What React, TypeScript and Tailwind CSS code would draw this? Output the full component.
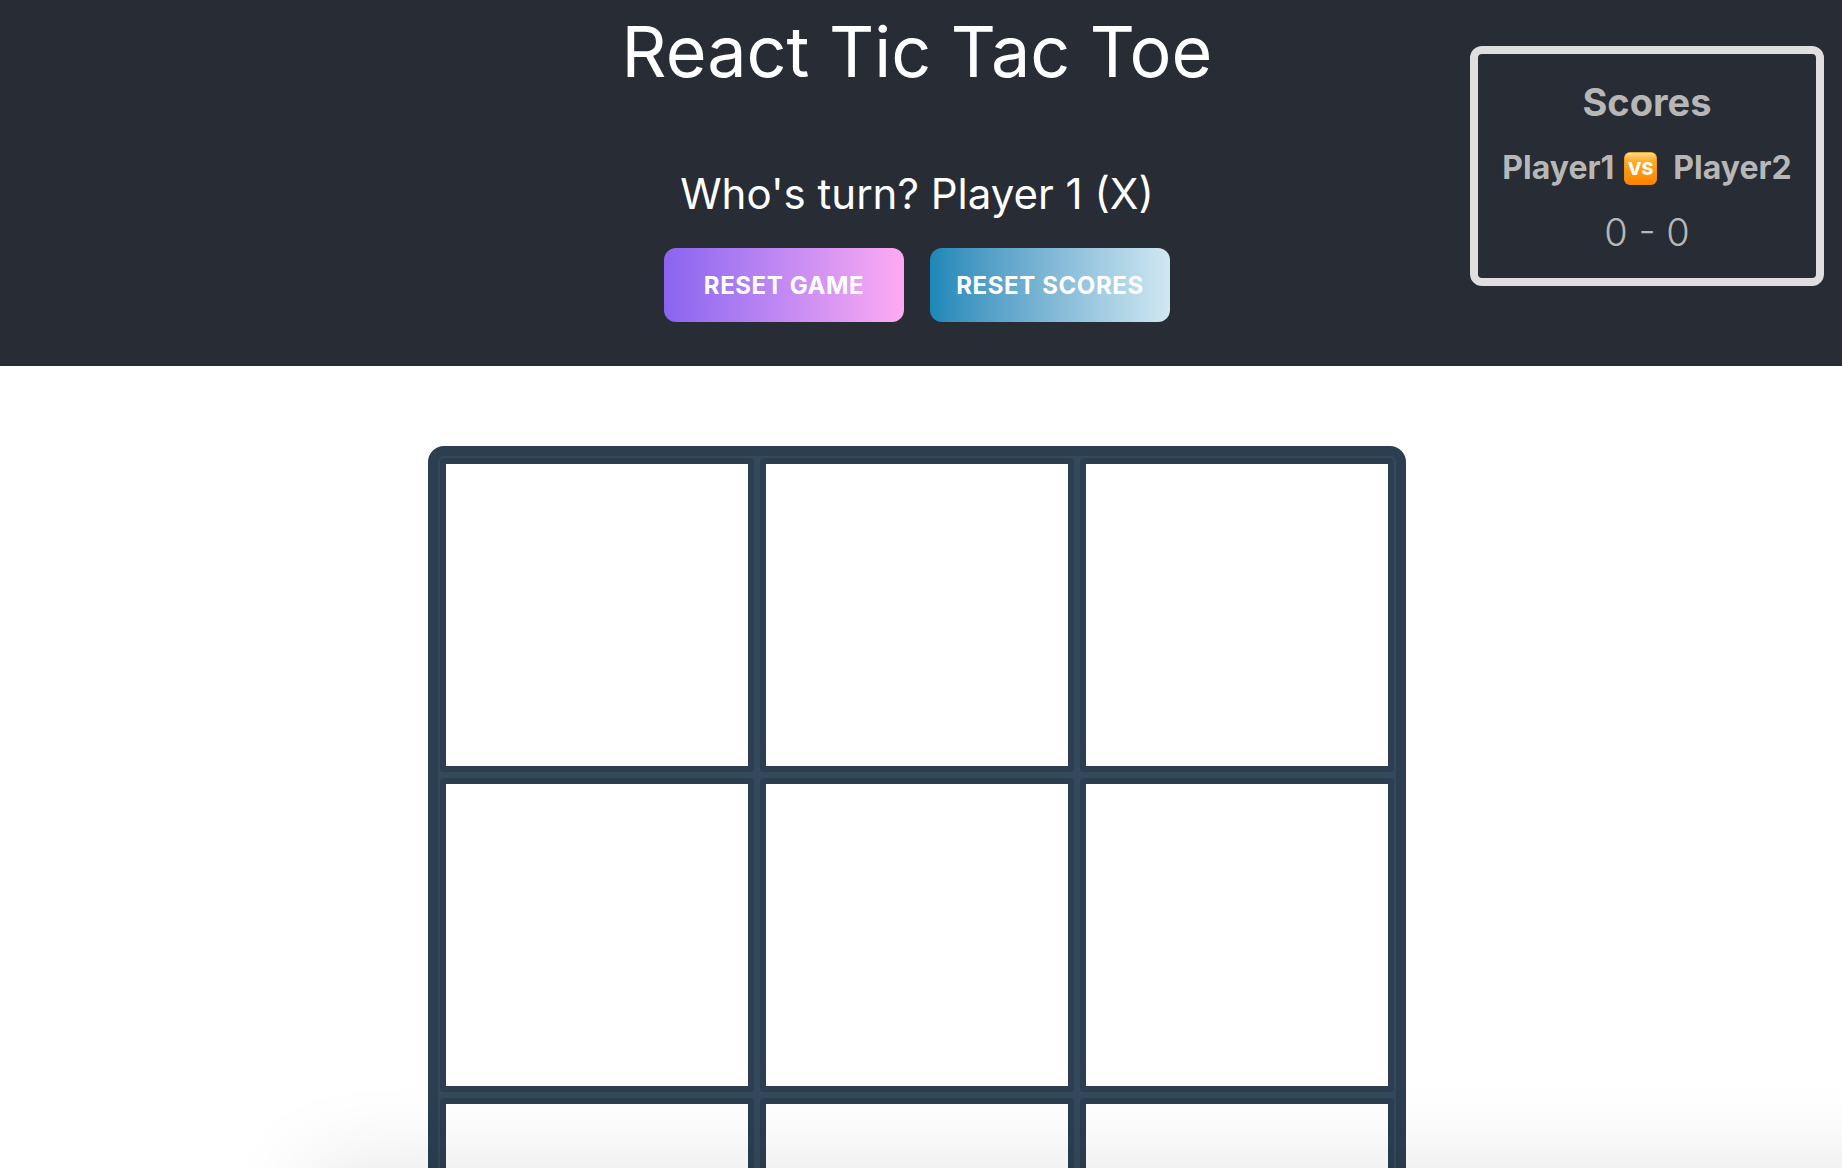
import { useState } from "react";

type Mark = "X" | "O" | null;

function VersusBadge() {
  return (
    <svg viewBox="0 0 33 33" className="h-[33px] w-[33px]" role="img" aria-label="versus">
      <defs>
        <linearGradient id="badge-fill" x1="0" y1="0" x2="0" y2="1">
          <stop offset="0" stopColor="#ffc04a" />
          <stop offset="0.35" stopColor="#ffa51a" />
          <stop offset="1" stopColor="#ff8200" />
        </linearGradient>
        <linearGradient id="badge-gloss" x1="0" y1="0" x2="0" y2="1">
          <stop offset="0" stopColor="#ffdf9c" />
          <stop offset="1" stopColor="#ffb02c" stopOpacity="0" />
        </linearGradient>
      </defs>
      <rect x="0" y="0" width="33" height="33" rx="6" fill="#d98a1c" />
      <rect x="0.5" y="0.5" width="32" height="32" rx="5.6" fill="url(#badge-fill)" />
      <rect x="1.5" y="1" width="30" height="10" rx="4.5" fill="url(#badge-gloss)" />
      <text x="16.5" y="22.5" textAnchor="middle" fontSize="18" fontWeight="800" fill="#fff" fontFamily="Inter, sans-serif">
        VS
      </text>
    </svg>
  );
}

export default function App() {
  const [cells, setCells] = useState<Mark[]>(Array(9).fill(null));
  const [scores, setScores] = useState([0, 0]);
  const turn = cells.filter(Boolean).length % 2;

  const play = (index: number) => {
    if (cells[index]) return;
    setCells(cells.map((cell, i) => (i === index ? (turn === 0 ? "X" : "O") : cell)));
  };

  return (
    <div className="relative h-screen overflow-hidden bg-white font-[Inter,sans-serif]">
      <header className="relative flex flex-col items-center bg-[#282c34] pt-2 pr-2 pb-11 text-white">
        <h1 className="text-[70px] leading-[88px]">React Tic Tac Toe</h1>
        <p className="mt-[72px] text-[42px] leading-[52px]">
          Who's turn? Player {turn + 1} ({turn === 0 ? "X" : "O"})
        </p>
        <div className="mt-7 flex gap-[26px]">
          <button
            type="button"
            onClick={() => setCells(Array(9).fill(null))}
            className="h-[74px] w-60 rounded-xl bg-linear-to-r from-[#8a64f0] to-[#ffaaf2] pt-0.5 text-2xl font-bold tracking-wide"
          >
            RESET GAME
          </button>
          <button
            type="button"
            onClick={() => setScores([0, 0])}
            className="h-[74px] w-60 rounded-xl bg-linear-to-r from-[#1a88b8] to-[#d0e8f2] pt-0.5 text-2xl font-bold tracking-wide"
          >
            RESET SCORES
          </button>
        </div>
        <section
          aria-label="Scores"
          className="absolute top-[46px] right-[18px] flex h-60 w-[354px] flex-col items-center rounded-xl border-8 border-[#e0dede] pt-6 text-[#b7b7b7]"
        >
          <h2 className="text-[38px] leading-[48px] font-bold">Scores</h2>
          <div className="mt-[22px] flex items-center text-[32px] leading-10 font-bold">
            <span>Player1</span>
            <span className="mr-4 ml-2.5">
              <VersusBadge />
            </span>
            <span>Player2</span>
          </div>
          <p className="mt-5 text-[38px] leading-[48px] font-light">
            {scores[0]} - {scores[1]}
          </p>
        </section>
      </header>

      <main className="flex justify-center pt-20 pr-2">
        <div className="grid grid-cols-3 gap-1.5 rounded-2xl border-10 border-[#2c3e50] bg-[#34495b] p-0.5">
          {cells.map((cell, i) => (
            <button
              key={i}
              type="button"
              aria-label={`Cell ${i + 1}`}
              onClick={() => play(i)}
              className="size-[314px] rounded-sm bg-[#2c3e50] p-1.5 text-[160px]"
            >
              <span className="flex size-full items-center justify-center bg-white">{cell}</span>
            </button>
          ))}
        </div>
      </main>

      <div className="pointer-events-none absolute top-full -right-40 left-[310px] h-40 shadow-[0_0_90px_rgba(0,0,0,0.11)]" />
    </div>
  );
}
